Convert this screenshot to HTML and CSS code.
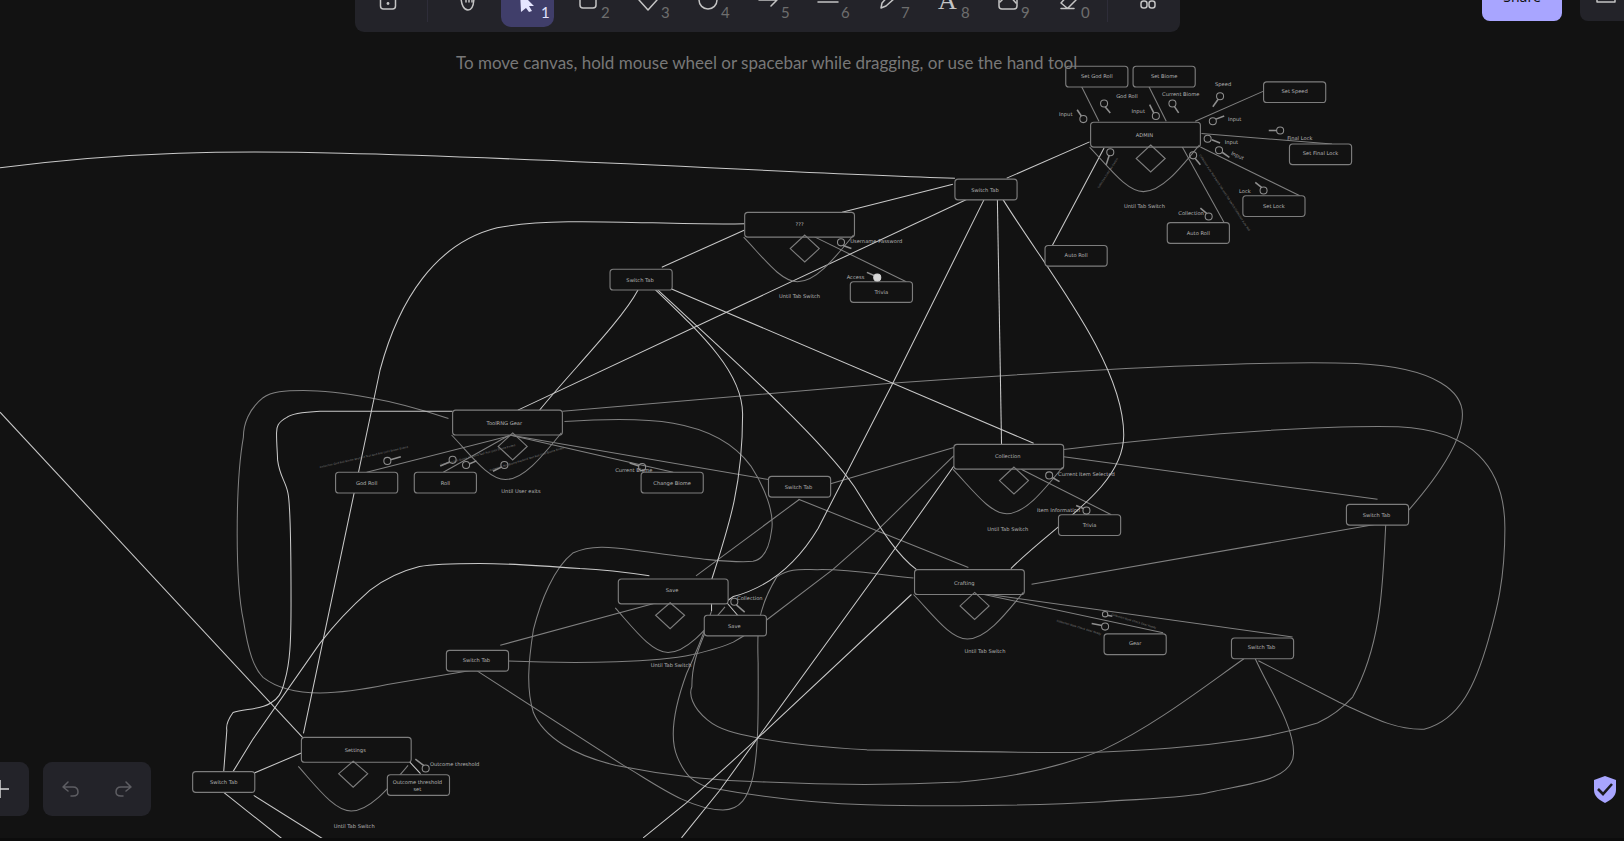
FILE: index.html
```html
<!DOCTYPE html>
<html lang="en">
<head>
    <meta charset="UTF-8">
    <meta name="viewport" content="width=device-width, initial-scale=1.0">
    <title>Excalidraw</title>
    <link rel="stylesheet" href="styles.css">
</head>
<body>
    <!-- drawing: coordinates in a 1568x812 space, the svg scales it up -->
    <svg class="board" viewBox="0 0 1568 812">
        <defs>
            <g id="state">
                <rect class="box" width="106" height="24" rx="3"/>
                <path class="dim" d="M-1,24 C19,45 35,67 51,67 C69,67 87,44 105,22"/>
                <path class="box" d="M58,22 L72,35 L58,48 L44,35 Z"/>
            </g>
            <g id="state-low">
                <rect class="box" width="106" height="24" rx="3"/>
                <path class="dim" d="M-3,28 C15,48 32,71 48,71 C66,71 85,48 103,27"/>
                <path class="box" d="M50,23 L64,35 L50,48 L36,35 Z"/>
            </g>
            <rect id="node" class="box" width="60" height="20" rx="3"/>
        </defs>

        <!-- dim wires -->
        <g class="dim">
            <path d="M433,404 C400,393 380,388 357,384 C335,380 315,377 293,377 C275,377 262,378 254,384 C240,395 235,410 235,422 C230,450 229,490 229,515 C229,550 231,580 235,599 C240,630 245,645 254,654 C268,665 290,669 309,669 C330,669 350,666 374,661 L463,646"/>
            <path d="M483,623 L634,582"/>
            <path d="M461,648 L602,739 C630,755 665,782 698,782 C715,782 722,770 727,750 C733,720 732,680 732,640 C731,610 730,590 750,557 C762,548 775,550 789,550 C820,549 855,556 882,558"/>
            <path d="M687,590 C680,610 670,635 663,650 C652,680 645,710 654,731 C662,750 670,755 683,760 C710,765 770,775 837,777 C900,779 1000,778 1065,774 C1110,771 1150,770 1168,765 C1200,757 1249,755 1249,727 C1249,700 1225,665 1212,636"/>
            <path d="M1338,506 C1335,560 1335,620 1306,673 C1295,685 1285,692 1272,698 C1250,705 1230,710 1203,714 C1150,722 1110,724 1065,726 C1000,728 880,724 837,724 C800,722 760,718 734,713 C710,708 695,705 683,695 C668,683 665,670 668,663 C668,640 675,625 681,610"/>
            <path d="M463,637 C520,640 560,640 595,639 C630,638 650,636 669,632 C690,627 700,624 708,620 C720,613 725,610 737,601 L804,550 L847,512 L921,440"/>
            <path d="M772,482 L672,556"/>
            <path d="M771,482 L935,548"/>
            <path d="M802,467 L921,432"/>
            <path d="M543,397 L860,370 C1000,360 1200,347 1310,351 C1390,355 1412,380 1412,400 C1412,430 1380,470 1358,495"/>
            <path d="M545,407 C620,402 690,402 725,450 C738,470 748,495 745,512 C743,528 738,540 727,542 C700,544 650,536 611,531 C590,528 570,526 553,534 C535,548 522,580 515,608 C510,640 508,665 515,688 C525,712 555,730 595,739 C640,748 690,754 740,755 C800,758 870,758 927,755 C975,751 1020,742 1065,724 C1115,700 1160,665 1201,636"/>
            <path d="M492,420 L742,463"/>
            <path d="M492,420 L650,456"/>
            <path d="M492,420 L428,456"/>
            <path d="M495,420 L354,456"/>
            <path d="M1027,434 C1100,425 1250,410 1350,412 C1420,415 1453,450 1453,510 C1453,560 1445,590 1437,618 C1425,660 1410,695 1375,704 C1345,705 1320,690 1293,678 L1215,638"/>
            <path d="M1027,441 L1330,482"/>
            <path d="M996,564 L1330,506"/>
            <path d="M941,572 L1248,615"/>
            <path d="M941,572 L1123,611"/>
            <path d="M986,453 L1073,497"/>
            <path d="M785,228 L875,272"/>
            <path d="M1044,83 L1061,117"/>
            <path d="M1109,83 L1126,117"/>
            <path d="M1220,88 L1154,117"/>
            <path d="M1160,129 L1286,139"/>
            <path d="M1159,142 L1255,189"/>
            <path d="M1141,141 L1182,215"/>
        </g>

        <!-- bright wires -->
        <g class="wire">
            <path d="M0,162 C120,146 230,145 330,148 C520,152 760,167 922,172"/>
            <path d="M920,178 L813,205"/>
            <path d="M1052,137 L972,172"/>
            <path d="M943,188 L500,396"/>
            <path d="M639,258 L719,222"/>
            <path d="M719,216 C640,218 540,208 480,220 C420,235 385,290 367,357 L293,708"/>
            <path d="M950,193 L862,370 L790,510 C775,535 750,565 708,576 L701,581"/>
            <path d="M963,193 L967,429"/>
            <path d="M968,192 C1010,260 1085,350 1085,420 C1085,470 1020,505 976,549"/>
            <path d="M630,277 C680,325 717,360 717,400 C717,470 703,510 687,560 L687,590"/>
            <path d="M634,279 C700,340 790,420 825,470 C850,510 865,535 885,550"/>
            <path d="M632,272 L998,428"/>
            <path d="M616,280 C600,310 550,360 521,396"/>
            <path d="M0,398 L293,713"/>
            <path d="M437,397 L309,397 C290,398 280,400 277,403 C268,408 267,412 267,418 C267,430 268,438 268,444 C270,460 276,465 278,476 C281,490 281,540 281,582 C281,620 280,640 275,657 C272,670 268,675 261,679 C250,686 235,684 225,688 C220,695 218,700 219,705 L216,745"/>
            <path d="M627,556 C600,552 580,550 560,549 C520,546 490,544 463,544 C440,544 420,544 405,547 C385,552 370,560 357,570 C340,585 325,600 309,621 L244,714 L225,745"/>
            <path d="M244,747 L291,727"/>
            <path d="M245,768 L315,812"/>
            <path d="M216,765 L275,812"/>
            <path d="M406,747 L394,734"/>
            <path d="M880,574 L740,705 L663,775 L621,809"/>
            <path d="M921,450 L877,512 L695,763 L658,809"/>
            <path d="M1066,143 L1016,237"/>
            <path d="M701,581 L713,595"/>
        </g>

        <!-- states -->
        <use href="#state" x="1053" y="118"/>
        <use href="#state" x="719" y="205"/>
        <use href="#state" x="437" y="396"/>
        <use href="#state" x="921" y="429"/>
        <use href="#state" x="883" y="550"/>
        <use href="#state-low" x="597" y="559"/>
        <use href="#state-low" x="291" y="712"/>

        <!-- actions -->
        <use href="#node" x="1029" y="64"/>
        <use href="#node" x="1094" y="64"/>
        <use href="#node" x="1220" y="79"/>
        <use href="#node" x="1245" y="139"/>
        <use href="#node" x="1200" y="189"/>
        <use href="#node" x="1127" y="215"/>
        <use href="#node" x="1009" y="237"/>
        <use href="#node" x="922" y="173"/>
        <use href="#node" x="589" y="260"/>
        <use href="#node" x="821" y="272"/>
        <use href="#node" x="742" y="460"/>
        <use href="#node" x="324" y="456"/>
        <use href="#node" x="400" y="456"/>
        <use href="#node" x="619" y="456"/>
        <use href="#node" x="1022" y="497"/>
        <use href="#node" x="1300" y="487"/>
        <use href="#node" x="680" y="594"/>
        <use href="#node" x="1066" y="612"/>
        <use href="#node" x="1189" y="616"/>
        <use href="#node" x="431" y="628"/>
        <use href="#node" x="186" y="745"/>
        <use href="#node" x="374" y="748"/>

        <!-- keys -->
        <g class="keys">
            <circle cx="1066" cy="100" r="3.4"/><path d="M1067,103 L1072,109"/>
            <circle cx="1046" cy="115" r="3.4"/><path d="M1044,112 L1040,106"/>
            <circle cx="1116" cy="112" r="3.4"/><path d="M1114,109 L1110,101"/>
            <circle cx="1132" cy="100" r="3.4"/><path d="M1134,103 L1138,109"/>
            <circle cx="1178" cy="93" r="3.4"/><path d="M1176,96 L1171,103"/>
            <circle cx="1171" cy="117" r="3.4"/><path d="M1174,115 L1182,112"/>
            <circle cx="1236" cy="126" r="3.4"/><path d="M1233,126 L1225,126"/>
            <circle cx="1166" cy="134" r="3.4"/><path d="M1170,135 L1178,138"/>
            <circle cx="1177" cy="145" r="3.4"/><path d="M1180,147 L1187,152"/>
            <circle cx="1152" cy="150" r="3.4"/><path d="M1154,153 L1159,159"/>
            <circle cx="1072" cy="147" r="3.4"/><path d="M1071,150 L1068,159"/>
            <circle cx="1220" cy="184" r="3.4"/><path d="M1218,181 L1212,176"/>
            <circle cx="1167" cy="209" r="3.4"/><path d="M1165,206 L1159,201"/>
            <circle cx="812" cy="234" r="3.4"/><path d="M814,237 L822,240"/>
            <path d="M844,266 L837,263"/>
            <circle class="on" cx="847" cy="268" r="3.4"/>
            <circle cx="374" cy="445" r="3.4"/><path d="M377,444 L387,441"/>
            <circle cx="437" cy="444" r="3.4"/><path d="M434,446 L425,450"/>
            <circle cx="450" cy="449" r="3.4"/><path d="M453,448 L460,445"/>
            <circle cx="487" cy="449" r="3.4"/><path d="M484,451 L476,455"/>
            <circle cx="620" cy="451" r="3.4"/><path d="M617,450 L608,447"/>
            <circle cx="1013" cy="459" r="3.4"/><path d="M1016,461 L1023,465"/>
            <circle cx="1049" cy="493" r="3.4"/><path d="M1046,491 L1039,488"/>
            <circle cx="1067" cy="593" r="2.6"/><path d="M1069,594 L1074,595"/>
            <circle cx="1067" cy="605" r="3.4"/><path d="M1064,604 L1054,602"/>
            <circle cx="709" cy="581" r="3.4"/><path d="M711,584 L719,591"/>
            <circle cx="411" cy="742" r="3.4"/><path d="M409,739 L401,733"/>
        </g>

        <!-- labels -->
        <g class="labels">
            <text x="1059" y="75">Set God Roll</text>
            <text x="1124" y="75">Set Biome</text>
            <text x="1250" y="90">Set Speed</text>
            <text x="1275" y="150">Set Final Lock</text>
            <text x="1230" y="201">Set Lock</text>
            <text x="1157" y="227">Auto Roll</text>
            <text x="1039" y="248">Auto Roll</text>
            <text x="1181" y="83">Speed</text>
            <text x="1088" y="95">God Roll</text>
            <text x="1140" y="93">Current Biome</text>
            <text x="1029" y="112">Input</text>
            <text x="1099" y="109">Input</text>
            <text x="1192" y="117">Input</text>
            <text x="1255" y="135">Final Lock</text>
            <text x="1189" y="139">Input</text>
            <text x="1195" y="152" transform="rotate(25 1195 150)">Input</text>
            <text x="1202" y="186">Lock</text>
            <text x="1150" y="208">Collection</text>
            <text x="1105" y="201">Until Tab Switch</text>
            <text x="1105" y="132">ADMIN</text>
            <text x="772" y="218">???</text>
            <text x="846" y="235">Username Password</text>
            <text x="826" y="269">Access</text>
            <text x="851" y="284">Trivia</text>
            <text x="772" y="288">Until Tab Switch</text>
            <text x="951" y="185">Switch Tab</text>
            <text x="618" y="272">Switch Tab</text>
            <text x="487" y="410">ToolRNG Gear</text>
            <text x="354" y="468">God Roll</text>
            <text x="430" y="468">Roll</text>
            <text x="649" y="468">Change Biome</text>
            <text x="503" y="476">Until User exits</text>
            <text x="612" y="456">Current Biome</text>
            <text x="771" y="472">Switch Tab</text>
            <text x="973" y="442">Collection</text>
            <text x="1049" y="460">Current Item Selected</text>
            <text x="1022" y="494">Item Information</text>
            <text x="1052" y="509">Trivia</text>
            <text x="973" y="513">Until Tab Switch</text>
            <text x="1329" y="499">Switch Tab</text>
            <text x="931" y="565">Crafting</text>
            <text x="951" y="630">Until Tab Switch</text>
            <text x="1096" y="623">Gear</text>
            <text x="1218" y="627">Switch Tab</text>
            <text x="649" y="572">Save</text>
            <text x="724" y="579">Collection</text>
            <text x="709" y="606">Save</text>
            <text x="648" y="644">Until Tab Switch</text>
            <text x="460" y="639">Switch Tab</text>
            <text x="343" y="726">Settings</text>
            <text x="216" y="757">Switch Tab</text>
            <text x="439" y="740">Outcome threshold</text>
            <text x="403" y="757">Outcome threshold</text>
            <text x="403" y="764">set</text>
            <text x="342" y="799">Until Tab Switch</text>
        </g>

        <!-- long notes running along the wires -->
        <g class="notes">
            <text transform="translate(1158 150) rotate(57)">Collection Auto Roll Switch Tab Until Tab Switch Collection Auto Roll</text>
            <text transform="translate(1061 182) rotate(-57)">Collection Until Tab Switch</text>
            <text transform="translate(309 452) rotate(-13)">Collection God Roll Biome Keybind Text God Roll Until Biome Ended</text>
            <text transform="translate(425 450) rotate(-15)">Collection Roll Biome Keybind Text Roll Until Biome Ended</text>
            <text transform="translate(473 455) rotate(-17)">Collection Roll Biome Keybind Text Roll Until Biome Ended</text>
            <text transform="translate(1073 594) rotate(17)">Collection Book Check Gear Ready</text>
            <text transform="translate(1020 600) rotate(17)">Collection Book Check Gear Ready</text>
        </g>
    </svg>

    <!-- main toolbar, pushed partly off the top of the page -->
    <div class="toolbar">
        <div class="tool">
            <svg class="icon" viewBox="0 -10 20 20"><rect x="2.5" y="-6" width="15" height="15" rx="3"/><circle class="dot" cx="10" cy="3.5" r="1.4"/></svg>
        </div>
        <div class="sep"></div>
        <div class="tool">
            <svg class="icon" viewBox="0 -10 20 20"><path d="M3,-4 C3,5 6,10 10,10 C14,10 16,6 16,-4"/><path d="M8,2 L8,-2 M11,2 L11,-2 M14,2 L14,-2"/></svg>
        </div>
        <div class="tool active">
            <svg class="icon cursor" viewBox="0 -10 20 20"><path d="M0,-8 L14,6 L9,6 L12,11 L9,12 L6,8 L1,12 Z"/></svg>
            <span class="num">1</span>
        </div>
        <div class="tool">
            <svg class="icon" viewBox="0 -10 20 20"><rect x="2" y="-8" width="16" height="16" rx="3"/></svg>
            <span class="num">2</span>
        </div>
        <div class="tool">
            <svg class="icon" viewBox="0 -10 20 20"><path d="M10,10 L1,0 L10,-10 L19,0 Z"/></svg>
            <span class="num">3</span>
        </div>
        <div class="tool">
            <svg class="icon" viewBox="0 -10 20 20"><circle cx="10" cy="0" r="9"/></svg>
            <span class="num">4</span>
        </div>
        <div class="tool">
            <svg class="icon" viewBox="0 -10 20 20"><path d="M1,0 L19,0 M13,-6 L19,0 L13,6"/></svg>
            <span class="num">5</span>
        </div>
        <div class="tool">
            <svg class="icon" viewBox="0 -10 20 20"><path d="M0,2 L20,2"/></svg>
            <span class="num">6</span>
        </div>
        <div class="tool">
            <svg class="icon" viewBox="0 -10 20 20"><path d="M3,8 L4,3 L12,-6 L17,-2 L8,6 Z"/></svg>
            <span class="num">7</span>
        </div>
        <div class="tool">
            <span class="glyph">A</span>
            <span class="num">8</span>
        </div>
        <div class="tool">
            <svg class="icon" viewBox="0 -10 20 20"><rect x="1" y="-8" width="18" height="17" rx="3"/><path d="M2,2 L10,-6 L18,3"/></svg>
            <span class="num">9</span>
        </div>
        <div class="tool">
            <svg class="icon" viewBox="0 -10 20 20"><path d="M9,8 L3,3 L11,-6 L18,0 L10,8 Z M3,8.5 L16,8.5"/></svg>
            <span class="num">0</span>
        </div>
        <div class="sep"></div>
        <div class="tool">
            <svg class="icon" viewBox="0 -10 20 20"><rect x="3" y="1" width="6" height="7" rx="2.5"/><rect x="11" y="1" width="6" height="7" rx="2.5"/></svg>
        </div>
    </div>

    <p class="hint">To move canvas, hold mouse wheel or spacebar while dragging, or use the hand tool</p>

    <div class="top-right">
        <button class="share">Share</button>
        <div class="library">
            <svg class="icon" viewBox="0 0 20 20"><path d="M1,-3 L1,2 L19,2 L19,-3"/></svg>
        </div>
    </div>

    <div class="bottom-left">
        <div class="panel zoom-panel">
            <svg class="icon plus" viewBox="0 0 18 18"><path d="M0,9 L18,9 M9,0 L9,18"/></svg>
        </div>
        <div class="panel history">
            <svg class="icon" viewBox="0 0 20 20"><path d="M8,3 L3,8 L8,12 M3,8 L13,8 C16,8 18,10 18,13 C18,16 16,17 13,17 L11,17"/></svg>
            <svg class="icon" viewBox="0 0 20 20"><path d="M12,3 L17,8 L12,12 M17,8 L7,8 C4,8 2,10 2,13 C2,16 4,17 7,17 L9,17"/></svg>
        </div>
    </div>

    <svg class="shield" viewBox="0 0 22 27">
        <path class="shield-body" d="M11,0 L22,4 L22,14 C22,20 17,24 11,27 C5,24 0,20 0,14 L0,4 Z"/>
        <path class="shield-check" d="M4,13 L9,18 L18,8"/>
    </svg>

    <div class="footer-edge"></div>
</body>
</html>
```

FILE: styles.css
```css
* {
    margin: 0;
    padding: 0;
    box-sizing: border-box;
}

body {
    width: 1624px;
    height: 841px;
    overflow: hidden;
    position: relative;
    background: #121212;
    font-family: "Noto Sans", sans-serif;
}

.board {
    display: block;
    width: 1624px;
    height: 841px;
}

.board path,
.board circle {
    fill: none;
}

.wire {
    stroke: #c9c9c9;
    stroke-width: 1;
}

.dim {
    stroke: #808080;
    stroke-width: 1;
    fill: none;
}

.box {
    stroke: #7d7d7d;
    stroke-width: 1.1;
    fill: #121212;
}

.board path.box {
    fill: none;
}

.keys {
    stroke: #8f8f8f;
    stroke-width: 1;
}

.keys path {
    stroke-width: 1.5;
}

.board circle.on {
    fill: #d8d8d8;
    stroke: #d8d8d8;
}

.labels {
    font-family: "DejaVu Sans", sans-serif;
    font-size: 5px;
    fill: #b5b5b5;
    text-anchor: middle;
}

.notes {
    font-family: "DejaVu Sans", sans-serif;
    font-size: 2.6px;
    fill: #7d7d7d;
}

.toolbar {
    position: absolute;
    top: -32px;
    left: 355px;
    width: 825px;
    height: 64px;
    padding: 0 6px;
    display: flex;
    align-items: center;
    gap: 7px;
    background: #232329;
    border-radius: 9px;
}

.tool {
    position: relative;
    width: 53px;
    height: 54px;
    flex: none;
    display: flex;
    align-items: center;
    justify-content: center;
    border-radius: 10px;
}

.tool.active {
    background: #403e6a;
}

.sep {
    width: 1px;
    height: 44px;
    margin: 0 6px;
    flex: none;
    background: #2e2d39;
}

.icon {
    width: 20px;
    height: 20px;
    overflow: visible;
    fill: none;
    stroke: #c4c4c4;
    stroke-width: 1.5;
    stroke-linecap: round;
    stroke-linejoin: round;
}

.cursor {
    fill: #e6e6ff;
    stroke: none;
    margin-left: 4px;
}

.dot {
    fill: #c4c4c4;
    stroke: none;
}

.num {
    position: absolute;
    left: 40px;
    top: 29px;
    font-family: Lato, sans-serif;
    font-size: 15px;
    line-height: 20px;
    color: #6e6e6e;
}

.active .num {
    color: #e3e2fe;
}

.glyph {
    font-family: "Liberation Serif", serif;
    font-size: 26px;
    line-height: 26px;
    color: #c4c4c4;
    margin-top: 1px;
}

.hint {
    position: absolute;
    top: 49px;
    left: 456px;
    width: 640px;
    font-family: Lato, sans-serif;
    font-size: 17px;
    line-height: 28px;
    color: #787878;
    white-space: nowrap;
}

.top-right {
    position: absolute;
    top: -29px;
    right: 0;
    height: 50px;
    display: flex;
    gap: 18px;
}

.share {
    width: 80px;
    height: 50px;
    border: none;
    border-radius: 8px;
    background: #a8a5ff;
    color: #121212;
    font-family: inherit;
    font-size: 14px;
}

.library {
    width: 44px;
    height: 50px;
    padding-top: 29px;
    padding-left: 16px;
    border-radius: 8px 0 0 8px;
    background: #232329;
}

.bottom-left {
    position: absolute;
    left: -58px;
    top: 762px;
    display: flex;
    gap: 14px;
}

.panel {
    height: 54px;
    display: flex;
    align-items: center;
    background: #232329;
    border-radius: 9px;
}

.zoom-panel {
    width: 87px;
    padding-left: 49px;
}

.history {
    width: 108px;
    justify-content: space-between;
    padding: 0 17px;
}

.history .icon {
    stroke: #5e5e63;
}

.plus {
    stroke: #d8d8d8;
    width: 18px;
    height: 18px;
    stroke-linecap: butt;
}

.shield {
    position: absolute;
    left: 1594px;
    top: 776px;
    width: 22px;
    height: 27px;
}

.shield-body {
    fill: #a8a5ff;
}

.shield-check {
    fill: none;
    stroke: #1b1b1f;
    stroke-width: 2.6;
}

.footer-edge {
    position: absolute;
    left: 0;
    bottom: 0;
    width: 100%;
    height: 3px;
    background: #0c0c0c;
}
```
